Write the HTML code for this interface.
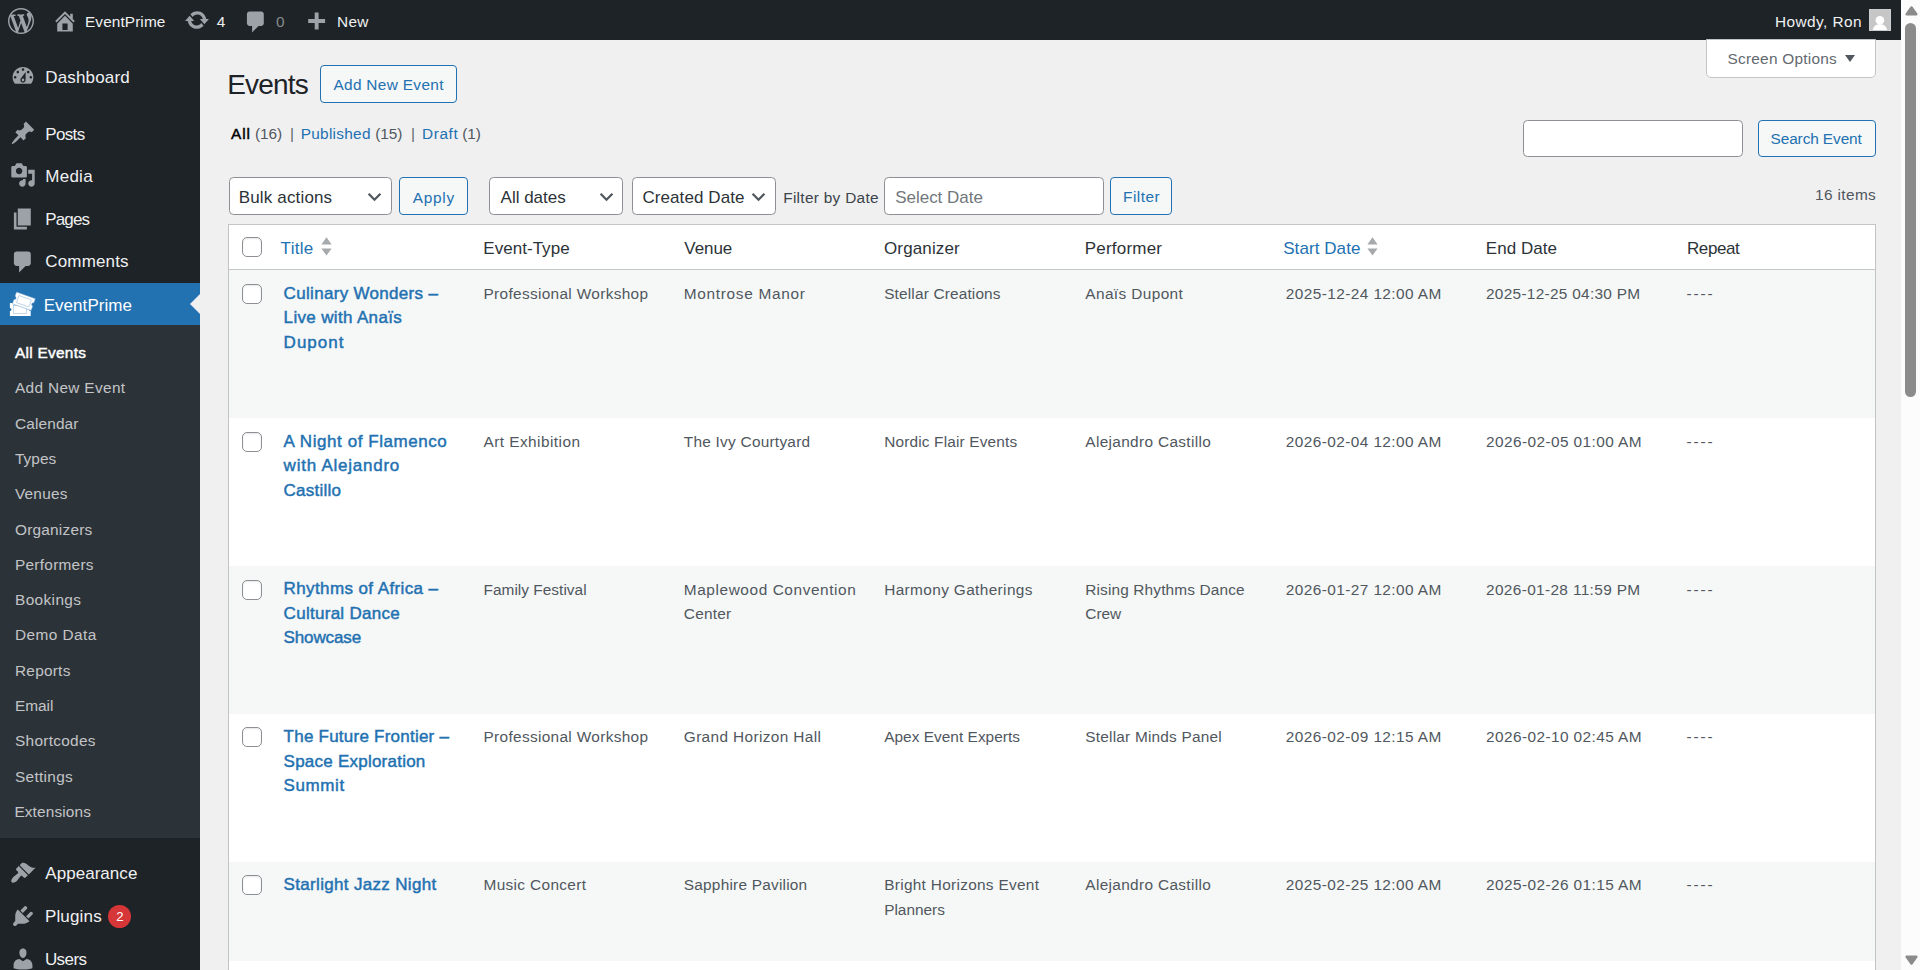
<!DOCTYPE html>
<html lang="en">
<head>
<meta charset="utf-8">
<title>Events ‹ EventPrime — WordPress</title>
<style>
*{box-sizing:border-box}
html,body{margin:0;padding:0}
html{overflow:hidden}
body{width:1920px;height:970px;overflow:hidden;position:relative;background:#f0f0f1;font-family:"Liberation Sans",sans-serif;font-size:16.25px;color:#3c434a}
svg{display:block}
.t{position:absolute;white-space:nowrap}
#bar{position:absolute;left:0;top:0;width:1901px;height:40px;background:#1d2327;color:#f0f0f1}
#menu{position:absolute;left:0;top:40px;width:200px;height:930px;background:#1d2327;color:#f0f0f1}
#menu>div,#bar>div,#main>div,#tbl>div{position:absolute}
.btn{position:absolute;border:1.25px solid #2271b1;border-radius:4px;background:#f6f7f7}
.sel{position:absolute;border:1.25px solid #8c8f94;border-radius:4.5px;background:#fff;height:37.5px}
.cb{position:absolute;left:242px;width:20px;height:20px;border:1.25px solid #8c8f94;border-radius:5px;background:#fff;box-shadow:inset 0 1px 2px rgba(0,0,0,.1)}
#tbl{position:absolute;left:228px;top:224px;width:1648px;height:760px;border:1px solid #c3c4c7;background:#fff;box-shadow:0 1px 1px rgba(0,0,0,.04)}
#sb{position:absolute;left:1901px;top:0;width:19px;height:970px;background:#fcfcfc}
</style>
</head>
<body>
<nav aria-label="Main menu">
<div id="menu"></div>
<svg style="position:absolute;left:9.50px;top:63.35px;width:26.0px;height:26.0px" viewBox="0 0 20 20"><path fill="#9ca2a7" d="M3.76 16h12.48c1.1-1.37 1.76-3.11 1.76-5 0-4.42-3.58-8-8-8s-8 3.58-8 8c0 1.89.66 3.63 1.76 5zM10 4c.55 0 1 .45 1 1s-.45 1-1 1-1-.45-1-1 .45-1 1-1zM6 6c.55 0 1 .45 1 1s-.45 1-1 1-1-.45-1-1 .45-1 1-1zm8 0c.55 0 1 .45 1 1s-.45 1-1 1-1-.45-1-1 .45-1 1-1zm-5.370 5.550L12 7v6c0 1.100-.9 2-2 2s-2-.9-2-2c0-.570.240-1.080.630-1.450zM4 10c.55 0 1 .45 1 1s-.45 1-1 1-1-.45-1-1 .45-1 1-1zm12 0c.55 0 1 .45 1 1s-.45 1-1 1-1-.45-1-1 .45-1 1-1zm-5 3c0-.55-.45-1-1-1s-1 .45-1 1 .45 1 1 1 1-.45 1-1z"/></svg>
<span class="t" style="top:68.10px;font-size:17.0px;line-height:19px;letter-spacing:0.147px;left:45.30px;color:#f0f0f1;">Dashboard</span>
<svg style="position:absolute;left:9.50px;top:119.85px;width:26.0px;height:26.0px" viewBox="0 0 20 20"><path fill="#9ca2a7" d="M10.44 3.02l1.82-1.82 6.36 6.35-1.83 1.82c-1.05-.68-2.48-.57-3.41.36l-.75.75c-.92.93-1.04 2.35-.35 3.41l-1.83 1.82-2.41-2.41-2.8 2.79c-.42.42-3.38 2.71-3.8 2.29s1.860-3.390 2.280-3.810l2.790-2.790L4.100 9.360l1.830-1.820c1.050.690 2.480.570 3.400-.360l.750-.750c.930-.920 1.050-2.350.360-3.410z"/></svg>
<span class="t" style="top:124.60px;font-size:17.0px;line-height:19px;letter-spacing:-0.666px;left:45.30px;color:#f0f0f1;">Posts</span>
<svg style="position:absolute;left:9.50px;top:162.25px;width:26.0px;height:26.0px" viewBox="0 0 20 20"><path fill="#9ca2a7" d="M13 11V4c0-.55-.45-1-1-1h-1.670L9 1H5L3.670 3H2c-.55 0-1 .45-1 1v7c0 .55.45 1 1 1h10c.55 0 1-.45 1-1zM7 4.500c1.380 0 2.500 1.120 2.500 2.500S8.380 9.500 7 9.500 4.500 8.380 4.500 7 5.620 4.500 7 4.500zM14 6h5v10.500c0 1.380-1.120 2.500-2.500 2.500S14 17.880 14 16.500s1.120-2.500 2.500-2.500c.170 0 .340.020.500.050V9h-3V6zm-4 8.050V13h2v3.500c0 1.380-1.120 2.500-2.500 2.500S7 17.880 7 16.500 8.120 14 9.500 14c.170 0 .340.020.500.050z"/></svg>
<span class="t" style="top:167.00px;font-size:17.0px;line-height:19px;letter-spacing:0.249px;left:45.30px;color:#f0f0f1;">Media</span>
<svg style="position:absolute;left:9.50px;top:205.75px;width:26.0px;height:26.0px" viewBox="0 0 20 20"><path fill="#9ca2a7" d="M6 15V2h10v13H6zm-1 1h8v2H3V5h2v11z"/></svg>
<span class="t" style="top:209.50px;font-size:17.0px;line-height:19px;letter-spacing:-0.858px;left:45.30px;color:#f0f0f1;">Pages</span>
<svg style="position:absolute;left:9.50px;top:248.55px;width:26.0px;height:26.0px" viewBox="0 0 20 20"><path fill="#9ca2a7" d="M5 2h9c1.1 0 2 .9 2 2v7c0 1.1-.9 2-2 2h-2l-5 5v-5H5c-1.1 0-2-.9-2-2V4c0-1.1.9-2 2-2z"/></svg>
<span class="t" style="top:252.30px;font-size:17.0px;line-height:19px;letter-spacing:0.156px;left:45.30px;color:#f0f0f1;">Comments</span>
<div style="position:absolute;left:0;top:283px;width:200px;height:42px;background:#2271b1"></div>
<div style="position:absolute;left:190px;top:293.5px;width:0;height:0;border:10.5px solid transparent;border-right:10px solid #f0f0f1;border-left:none"></div>
<svg style="position:absolute;left:0;top:284px;width:50px;height:40px" viewBox="0 284 50 40">
<path fill="#fff" d="M9.900 303h20.800v4.900a1.600 1.600 0 0 0 0 3.200v4.900H9.900v-4.900a1.600 1.600 0 0 0 0-3.200z"/>
<rect x="13.600" y="305.600" width="12.800" height="8" fill="none" stroke="#9fc1e2" stroke-width=".6"/>
<g transform="translate(16.500 292) rotate(19.400)">
<path fill="#fff" stroke="#6fa3d3" stroke-width=".5" d="M0 0h20v4.600a1.650 1.650 0 0 0 0 3.300v4.600H0v-4.600a1.650 1.650 0 0 0 0-3.300z"/>
<rect x="3.400" y="2.500" width="13.200" height="7.500" fill="none" stroke="#9fc1e2" stroke-width=".6"/>
</g></svg>
<span class="t" style="top:295.60px;font-size:17.0px;line-height:19px;letter-spacing:0.046px;left:43.70px;color:#fff;">EventPrime</span>
<div style="position:absolute;left:0;top:325px;width:200px;height:513px;background:#2c3338"></div>
<span class="t" style="top:344.00px;font-size:15.4px;line-height:17px;letter-spacing:0.278px;left:15.00px;color:#fff;-webkit-text-stroke:0.45px;">All Events</span>
<span class="t" style="top:379.30px;font-size:15.4px;line-height:17px;letter-spacing:0.330px;left:15.00px;color:#c3c4c7;">Add New Event</span>
<span class="t" style="top:414.60px;font-size:15.4px;line-height:17px;letter-spacing:0.133px;left:15.00px;color:#c3c4c7;">Calendar</span>
<span class="t" style="top:449.90px;font-size:15.4px;line-height:17px;letter-spacing:0.057px;left:15.00px;color:#c3c4c7;">Types</span>
<span class="t" style="top:485.20px;font-size:15.4px;line-height:17px;letter-spacing:0.199px;left:15.00px;color:#c3c4c7;">Venues</span>
<span class="t" style="top:520.50px;font-size:15.4px;line-height:17px;letter-spacing:0.214px;left:15.00px;color:#c3c4c7;">Organizers</span>
<span class="t" style="top:555.80px;font-size:15.4px;line-height:17px;letter-spacing:0.268px;left:15.00px;color:#c3c4c7;">Performers</span>
<span class="t" style="top:591.10px;font-size:15.4px;line-height:17px;letter-spacing:0.385px;left:15.00px;color:#c3c4c7;">Bookings</span>
<span class="t" style="top:626.40px;font-size:15.4px;line-height:17px;letter-spacing:0.429px;left:15.00px;color:#c3c4c7;">Demo Data</span>
<span class="t" style="top:661.70px;font-size:15.4px;line-height:17px;letter-spacing:0.239px;left:15.00px;color:#c3c4c7;">Reports</span>
<span class="t" style="top:697.00px;font-size:15.4px;line-height:17px;letter-spacing:-0.036px;left:15.00px;color:#c3c4c7;">Email</span>
<span class="t" style="top:732.30px;font-size:15.4px;line-height:17px;letter-spacing:0.289px;left:15.00px;color:#c3c4c7;">Shortcodes</span>
<span class="t" style="top:767.60px;font-size:15.4px;line-height:17px;letter-spacing:0.296px;left:15.00px;color:#c3c4c7;">Settings</span>
<span class="t" style="top:802.90px;font-size:15.4px;line-height:17px;letter-spacing:0.134px;left:14.40px;color:#c3c4c7;">Extensions</span>
<svg style="position:absolute;left:9.50px;top:859.75px;width:26.0px;height:26.0px" viewBox="0 0 20 20"><path fill="#9ca2a7" d="M14.48 11.06L7.41 3.99l1.5-1.5c.5-.56 2.3-.47 3.51.32 1.21.8 1.43 1.28 2.91 2.1 1.18.64 2.45 1.26 4.45.85zm-.71.71L6.7 4.7 4.93 6.47c-.39.39-.39 1.02 0 1.41l1.06 1.06c.39.39.39 1.03 0 1.42-.6.6-1.43 1.11-2.21 1.69-.35.26-.7.53-1.01.84C1.43 14.23.4 16.08 1.4 17.07c.99 1 2.84-.03 4.18-1.36.31-.31.58-.66.85-1.02.57-.78 1.08-1.61 1.69-2.21.39-.39 1.02-.39 1.41 0l1.06 1.06c.39.39 1.02.39 1.41 0z"/></svg>
<span class="t" style="top:864.00px;font-size:17.0px;line-height:19px;letter-spacing:0.040px;left:45.30px;color:#f0f0f1;">Appearance</span>
<svg style="position:absolute;left:9.50px;top:903.05px;width:26.0px;height:26.0px" viewBox="0 0 20 20"><path fill="#9ca2a7" d="M13.11 4.36L9.87 7.6 8 5.73l3.24-3.24c.35-.34 1.05-.2 1.56.32.52.51.66 1.21.31 1.55zm-8 1.77l.91-1.12 9.010 9.010-1.190.840c-.710.710-2.630 1.160-3.820 1.160H6.140L4.900 17.260c-.590.590-1.540.590-2.120 0-.590-.580-.590-1.530 0-2.120l1.240-1.240v-3.880c0-1.130.4-3.190 1.090-3.890zm7.260 3.970l3.240-3.240c.34-.35 1.040-.21 1.550.31.520.51.660 1.210.310 1.550l-3.240 3.250z"/></svg>
<span class="t" style="top:907.00px;font-size:17.0px;line-height:19px;letter-spacing:0.174px;left:44.90px;color:#f0f0f1;">Plugins</span>
<div style="position:absolute;left:108.200px;top:905px;width:23px;height:23px;border-radius:12px;background:#d63638"></div>
<span class="t" style="top:909.20px;font-size:13.2px;line-height:15px;letter-spacing:0.071px;left:116.20px;color:#fff;">2</span>
<svg style="position:absolute;left:9.50px;top:945.75px;width:26.0px;height:26.0px" viewBox="0 0 20 20"><path fill="#9ca2a7" d="M10 9.25c-2.27 0-2.73-3.44-2.73-3.44C7 4.02 7.82 2 9.970 2c2.160 0 2.980 2.020 2.710 3.810 0 0-.410 3.440-2.680 3.440zm0 2.570L12.720 10c2.390 0 4.520 2.330 4.520 4.530v2.490s-3.650 1.130-7.240 1.130c-3.650 0-7.240-1.130-7.240-1.130v-2.490c0-2.250 1.940-4.480 4.470-4.480z"/></svg>
<span class="t" style="top:950.00px;font-size:17.0px;line-height:19px;letter-spacing:-0.571px;left:44.90px;color:#f0f0f1;">Users</span>
</nav>
<header aria-label="Toolbar">
<div id="bar"></div>
<svg style="position:absolute;left:8.25px;top:7.50px;width:26.0px;height:26.0px" viewBox="0 0 20 20"><path fill="#9ca2a7" d="M20 10c0-5.51-4.49-10-10-10C4.48 0 0 4.49 0 10c0 5.52 4.48 10 10 10 5.51 0 10-4.48 10-10zM7.78 15.37L4.37 6.22c.55-.02 1.17-.08 1.17-.08.5-.06.44-1.13-.06-1.11 0 0-1.45.11-2.37.11-.18 0-.37 0-.58-.01C4.12 2.69 6.87 1.11 10 1.11c2.33 0 4.45.87 6.05 2.34-.68-.11-1.65.39-1.65 1.58 0 .74.45 1.36.9 2.1.35.61.55 1.36.55 2.46 0 1.49-1.4 5-1.4 5l-3.03-8.37c.54-.02.82-.17.82-.17.5-.05.44-1.25-.06-1.22 0 0-1.44.12-2.38.12-.87 0-2.33-.12-2.33-.12-.5-.03-.56 1.2-.06 1.22l.92.08 1.26 3.41zM17.41 10c.24-.64.74-1.87.43-4.25.7 1.29 1.05 2.71 1.05 4.25 0 3.29-1.73 6.24-4.4 7.78.97-2.59 1.94-5.2 2.92-7.78zM6.1 18.09C3.12 16.65 1.11 13.53 1.11 10c0-1.3.23-2.48.72-3.59C3.25 10.3 4.67 14.2 6.1 18.09zm4.03-6.63l2.58 6.98c-.86.29-1.76.45-2.71.45-.79 0-1.57-.11-2.29-.33.81-2.38 1.62-4.74 2.42-7.1z"/></svg>
<svg style="position:absolute;left:51.50px;top:7.90px;width:26.0px;height:26.0px" viewBox="0 0 20 20"><path fill="#9ca2a7" d="M16 8.5l1.53 1.53-1.06 1.06L10 4.62l-6.47 6.47-1.06-1.06L10 2.5l4 4v-2h2v4zm-6-2.46l6 5.99V18H4v-5.97zM12 17v-5H8v5h4z"/></svg>
<span class="t" style="top:13.00px;font-size:15.4px;line-height:17px;letter-spacing:0.089px;left:85.00px;color:#f0f0f1;">EventPrime</span>
<svg style="position:absolute;left:183.50px;top:7.30px;width:26.0px;height:26.0px" viewBox="0 0 20 20"><path fill="#9ca2a7" d="M10.2 3.28c3.53 0 6.43 2.61 6.92 6h2.08l-3.5 4-3.5-4h2.32c-.45-1.97-2.21-3.45-4.32-3.45-1.45 0-2.73.71-3.54 1.78L4.95 5.66C6.23 4.2 8.11 3.28 10.2 3.28zm-.4 13.44c-3.52 0-6.43-2.61-6.92-6H.8l3.5-4c1.17 1.33 2.33 2.67 3.5 4H5.48c.45 1.97 2.21 3.45 4.32 3.45 1.45 0 2.73-.71 3.54-1.78l1.71 1.95c-1.28 1.46-3.15 2.38-5.25 2.38z"/></svg>
<span class="t" style="top:13.00px;font-size:15.4px;line-height:17px;letter-spacing:0.195px;left:216.70px;color:#f0f0f1;">4</span>
<svg style="position:absolute;left:243.25px;top:8.50px;width:26.0px;height:26.0px" viewBox="0 0 20 20"><path fill="#9ca2a7" d="M5 2h9c1.1 0 2 .9 2 2v7c0 1.1-.9 2-2 2h-2l-5 5v-5H5c-1.1 0-2-.9-2-2V4c0-1.1.9-2 2-2z"/></svg>
<span class="t" style="top:13.00px;font-size:15.4px;line-height:17px;letter-spacing:0.195px;left:276.00px;color:#878b8e;">0</span>
<svg style="position:absolute;left:303.20px;top:9.50px;width:26.0px;height:26.0px" viewBox="0 0 20 20"><path fill="#9ca2a7" d="M17 7v3h-5v5H9v-5H4V7h5V2h3v5h5z"/></svg>
<span class="t" style="top:13.00px;font-size:15.4px;line-height:17px;letter-spacing:0.299px;left:337.00px;color:#f0f0f1;">New</span>
<span class="t" style="top:13.00px;font-size:15.4px;line-height:17px;letter-spacing:0.436px;left:1775.00px;color:#f0f0f1;">Howdy, Ron</span>
<div style="position:absolute;left:1869px;top:9px;width:22px;height:22px;background:#c6c6c6;border:1px solid #cacccf;overflow:hidden"><svg style="position:absolute;left:0;top:0;width:20px;height:20px" viewBox="0 0 20 20"><circle cx="9.900" cy="10.200" r="4.300" fill="#fff"/><path fill="#fff" d="M2.600 20.500c.6-4.300 3.400-6.200 7.300-6.200s6.700 1.900 7.300 6.200z"/></svg></div>
</header>
<main>
<div style="position:absolute;left:1706.250px;top:39px;width:170px;height:38.600px;background:#fff;border:1.25px solid #c3c4c7;border-radius:0 0 5px 5px"></div>
<span class="t" style="top:49.50px;font-size:15.4px;line-height:17px;letter-spacing:0.243px;left:1727.50px;color:#646970;">Screen Options</span>
<div style="position:absolute;left:1844.800px;top:54.800px;width:0;height:0;border:5.200px solid transparent;border-top:7.800px solid #50575e;border-bottom:none"></div>
<span class="t" style="top:68.60px;font-size:28.0px;line-height:31px;letter-spacing:-0.808px;left:227.20px;color:#1d2327;">Events</span>
<div class="btn" style="left:320.200px;top:65px;width:136.500px;height:37.800px"></div>
<span class="t" style="top:75.70px;font-size:15.4px;line-height:17px;letter-spacing:0.330px;left:333.40px;color:#2271b1;">Add New Event</span>
<span class="t" style="top:124.50px;font-size:15.4px;line-height:17px;letter-spacing:0.894px;left:231.00px;color:#000;-webkit-text-stroke:0.45px;">All</span>
<span class="t" style="top:124.50px;font-size:15.4px;line-height:17px;letter-spacing:-0.020px;left:254.90px;color:#50575e;">(16)</span>
<span class="t" style="top:124.50px;font-size:15.4px;line-height:17px;letter-spacing:-0.112px;left:289.90px;color:#646970;">|</span>
<span class="t" style="top:124.50px;font-size:15.4px;line-height:17px;letter-spacing:0.278px;left:300.70px;color:#2271b1;">Published</span>
<span class="t" style="top:124.50px;font-size:15.4px;line-height:17px;letter-spacing:-0.020px;left:375.20px;color:#50575e;">(15)</span>
<span class="t" style="top:124.50px;font-size:15.4px;line-height:17px;letter-spacing:-0.112px;left:410.90px;color:#646970;">|</span>
<span class="t" style="top:124.50px;font-size:15.4px;line-height:17px;letter-spacing:0.633px;left:421.90px;color:#2271b1;">Draft</span>
<span class="t" style="top:124.50px;font-size:15.4px;line-height:17px;letter-spacing:-0.127px;left:462.30px;color:#50575e;">(1)</span>
<div class="sel" style="left:1523px;top:120px;width:219.700px;height:37px"></div>
<div class="btn" style="left:1758px;top:120px;width:118px;height:37px"></div>
<span class="t" style="top:130.20px;font-size:15.4px;line-height:17px;letter-spacing:-0.096px;left:1770.50px;color:#2271b1;">Search Event</span>
<div class="sel" style="left:229.200px;top:177.300px;width:162.500px"></div>
<span class="t" style="top:187.70px;font-size:17.0px;line-height:19px;letter-spacing:0.160px;left:238.70px;color:#2c3338;">Bulk actions</span>
<svg style="position:absolute;left:367.4px;top:192px;width:15px;height:10px" viewBox="0 0 15 10"><path d="M1.600 1.800l5.900 5.900 5.900-5.900" fill="none" stroke="#50575e" stroke-width="2.300"/></svg>
<div class="btn" style="left:399.200px;top:177.300px;width:68.800px;height:37.500px"></div>
<span class="t" style="top:188.70px;font-size:15.4px;line-height:17px;letter-spacing:0.714px;left:412.80px;color:#2271b1;">Apply</span>
<div class="sel" style="left:489.300px;top:177.300px;width:133.300px"></div>
<span class="t" style="top:187.70px;font-size:17.0px;line-height:19px;letter-spacing:-0.018px;left:500.60px;color:#2c3338;">All dates</span>
<svg style="position:absolute;left:598.7px;top:192px;width:15px;height:10px" viewBox="0 0 15 10"><path d="M1.600 1.800l5.900 5.900 5.900-5.900" fill="none" stroke="#50575e" stroke-width="2.300"/></svg>
<div class="sel" style="left:632.300px;top:177.300px;width:143.300px"></div>
<span class="t" style="top:187.70px;font-size:17.0px;line-height:19px;letter-spacing:0.089px;left:642.40px;color:#2c3338;">Created Date</span>
<svg style="position:absolute;left:750.8px;top:192px;width:15px;height:10px" viewBox="0 0 15 10"><path d="M1.600 1.800l5.900 5.900 5.900-5.900" fill="none" stroke="#50575e" stroke-width="2.300"/></svg>
<span class="t" style="top:189.00px;font-size:15.4px;line-height:17px;letter-spacing:0.297px;left:783.20px;color:#3c434a;">Filter by Date</span>
<div class="sel" style="left:884.400px;top:177.300px;width:219.200px"></div>
<span class="t" style="top:187.70px;font-size:17.0px;line-height:19px;letter-spacing:-0.019px;left:895.20px;color:#72777c;">Select Date</span>
<div class="btn" style="left:1110px;top:177.300px;width:62px;height:37.500px"></div>
<span class="t" style="top:188.40px;font-size:15.4px;line-height:17px;letter-spacing:0.446px;left:1123.10px;color:#2271b1;">Filter</span>
<span class="t" style="top:186.40px;font-size:15.4px;line-height:17px;letter-spacing:0.373px;left:1815.00px;color:#50575e;">16 items</span>
<div id="tbl"></div>
<div style="position:absolute;left:229px;top:269px;width:1646px;height:1px;background:#c3c4c7"></div>
<div style="position:absolute;left:229px;top:270px;width:1646px;height:148px;background:#f6f7f7"></div>
<div style="position:absolute;left:229px;top:566px;width:1646px;height:148px;background:#f6f7f7"></div>
<div style="position:absolute;left:229px;top:862px;width:1646px;height:99px;background:#f6f7f7"></div>
<i class="cb" style="top:237px"></i>
<span class="t" style="top:238.75px;font-size:17.0px;line-height:19px;letter-spacing:0.311px;left:280.60px;color:#2271b1;">Title</span>
<svg style="position:absolute;left:320.8px;top:236.500px;width:11px;height:19px" viewBox="0 0 11 19"><path d="M5.500 .300l5.100 7.200H.400zM5.500 18.600l5.100-7.200H.400z" fill="#a7aaad"/></svg>
<span class="t" style="top:238.75px;font-size:17.0px;line-height:19px;letter-spacing:0.033px;left:483.30px;color:#2c3338;">Event-Type</span>
<span class="t" style="top:238.75px;font-size:17.0px;line-height:19px;letter-spacing:-0.060px;left:684.30px;color:#2c3338;">Venue</span>
<span class="t" style="top:238.75px;font-size:17.0px;line-height:19px;letter-spacing:0.140px;left:884.00px;color:#2c3338;">Organizer</span>
<span class="t" style="top:238.75px;font-size:17.0px;line-height:19px;letter-spacing:0.202px;left:1084.80px;color:#2c3338;">Performer</span>
<span class="t" style="top:238.75px;font-size:17.0px;line-height:19px;letter-spacing:0.073px;left:1283.20px;color:#2271b1;">Start Date</span>
<svg style="position:absolute;left:1367px;top:236.500px;width:11px;height:19px" viewBox="0 0 11 19"><path d="M5.500 .300l5.100 7.200H.400zM5.500 18.600l5.100-7.200H.400z" fill="#a7aaad"/></svg>
<span class="t" style="top:238.75px;font-size:17.0px;line-height:19px;letter-spacing:0.031px;left:1485.80px;color:#2c3338;">End Date</span>
<span class="t" style="top:238.75px;font-size:17.0px;line-height:19px;letter-spacing:-0.425px;left:1687.00px;color:#2c3338;">Repeat</span>
<i class="cb" style="top:284px"></i>
<span class="t" style="top:284.00px;font-size:17.0px;line-height:19px;letter-spacing:0.313px;left:283.60px;color:#2271b1;-webkit-text-stroke:0.45px;">Culinary Wonders –</span>
<span class="t" style="top:308.00px;font-size:17.0px;line-height:19px;letter-spacing:0.340px;left:283.60px;color:#2271b1;-webkit-text-stroke:0.45px;">Live with Anaïs</span>
<span class="t" style="top:333.00px;font-size:17.0px;line-height:19px;letter-spacing:1.016px;left:283.60px;color:#2271b1;-webkit-text-stroke:0.45px;">Dupont</span>
<span class="t" style="top:285.00px;font-size:15.4px;line-height:17px;letter-spacing:0.327px;left:483.50px;color:#50575e;">Professional Workshop</span>
<span class="t" style="top:285.00px;font-size:15.4px;line-height:17px;letter-spacing:0.691px;left:683.80px;color:#50575e;">Montrose Manor</span>
<span class="t" style="top:285.00px;font-size:15.4px;line-height:17px;letter-spacing:0.161px;left:884.20px;color:#50575e;">Stellar Creations</span>
<span class="t" style="top:285.00px;font-size:15.4px;line-height:17px;letter-spacing:0.390px;left:1085.30px;color:#50575e;">Anaïs Dupont</span>
<span class="t" style="top:285.00px;font-size:15.4px;line-height:17px;letter-spacing:0.416px;left:1285.80px;color:#50575e;">2025-12-24 12:00 AM</span>
<span class="t" style="top:285.00px;font-size:15.4px;line-height:17px;letter-spacing:0.292px;left:1486.00px;color:#50575e;">2025-12-25 04:30 PM</span>
<span class="t" style="top:285.00px;font-size:15.4px;line-height:17px;letter-spacing:1.827px;left:1686.60px;color:#50575e;">----</span>
<i class="cb" style="top:432px"></i>
<span class="t" style="top:432.00px;font-size:17.0px;line-height:19px;letter-spacing:0.563px;left:283.60px;color:#2271b1;-webkit-text-stroke:0.45px;">A Night of Flamenco</span>
<span class="t" style="top:456.00px;font-size:17.0px;line-height:19px;letter-spacing:0.758px;left:283.60px;color:#2271b1;-webkit-text-stroke:0.45px;">with Alejandro</span>
<span class="t" style="top:481.00px;font-size:17.0px;line-height:19px;letter-spacing:0.223px;left:283.60px;color:#2271b1;-webkit-text-stroke:0.45px;">Castillo</span>
<span class="t" style="top:433.00px;font-size:15.4px;line-height:17px;letter-spacing:0.449px;left:483.50px;color:#50575e;">Art Exhibition</span>
<span class="t" style="top:433.00px;font-size:15.4px;line-height:17px;letter-spacing:0.248px;left:683.80px;color:#50575e;">The Ivy Courtyard</span>
<span class="t" style="top:433.00px;font-size:15.4px;line-height:17px;letter-spacing:0.165px;left:884.20px;color:#50575e;">Nordic Flair Events</span>
<span class="t" style="top:433.00px;font-size:15.4px;line-height:17px;letter-spacing:0.338px;left:1085.30px;color:#50575e;">Alejandro Castillo</span>
<span class="t" style="top:433.00px;font-size:15.4px;line-height:17px;letter-spacing:0.416px;left:1285.80px;color:#50575e;">2026-02-04 12:00 AM</span>
<span class="t" style="top:433.00px;font-size:15.4px;line-height:17px;letter-spacing:0.416px;left:1486.00px;color:#50575e;">2026-02-05 01:00 AM</span>
<span class="t" style="top:433.00px;font-size:15.4px;line-height:17px;letter-spacing:1.827px;left:1686.60px;color:#50575e;">----</span>
<i class="cb" style="top:580px"></i>
<span class="t" style="top:579.00px;font-size:17.0px;line-height:19px;letter-spacing:0.392px;left:283.60px;color:#2271b1;-webkit-text-stroke:0.45px;">Rhythms of Africa –</span>
<span class="t" style="top:604.00px;font-size:17.0px;line-height:19px;letter-spacing:0.281px;left:283.60px;color:#2271b1;-webkit-text-stroke:0.45px;">Cultural Dance</span>
<span class="t" style="top:628.00px;font-size:17.0px;line-height:19px;letter-spacing:-0.133px;left:283.60px;color:#2271b1;-webkit-text-stroke:0.45px;">Showcase</span>
<span class="t" style="top:581.00px;font-size:15.4px;line-height:17px;letter-spacing:0.032px;left:483.50px;color:#50575e;">Family Festival</span>
<span class="t" style="top:581.00px;font-size:15.4px;line-height:17px;letter-spacing:0.588px;left:683.80px;color:#50575e;">Maplewood Convention</span>
<span class="t" style="top:605.00px;font-size:15.4px;line-height:17px;letter-spacing:0.237px;left:683.80px;color:#50575e;">Center</span>
<span class="t" style="top:581.00px;font-size:15.4px;line-height:17px;letter-spacing:0.368px;left:884.20px;color:#50575e;">Harmony Gatherings</span>
<span class="t" style="top:581.00px;font-size:15.4px;line-height:17px;letter-spacing:0.145px;left:1085.30px;color:#50575e;">Rising Rhythms Dance</span>
<span class="t" style="top:605.00px;font-size:15.4px;line-height:17px;letter-spacing:0.008px;left:1085.30px;color:#50575e;">Crew</span>
<span class="t" style="top:581.00px;font-size:15.4px;line-height:17px;letter-spacing:0.416px;left:1285.80px;color:#50575e;">2026-01-27 12:00 AM</span>
<span class="t" style="top:581.00px;font-size:15.4px;line-height:17px;letter-spacing:0.356px;left:1486.00px;color:#50575e;">2026-01-28 11:59 PM</span>
<span class="t" style="top:581.00px;font-size:15.4px;line-height:17px;letter-spacing:1.827px;left:1686.60px;color:#50575e;">----</span>
<i class="cb" style="top:727px"></i>
<span class="t" style="top:727.00px;font-size:17.0px;line-height:19px;letter-spacing:0.234px;left:283.60px;color:#2271b1;-webkit-text-stroke:0.45px;">The Future Frontier –</span>
<span class="t" style="top:752.00px;font-size:17.0px;line-height:19px;letter-spacing:0.233px;left:283.60px;color:#2271b1;-webkit-text-stroke:0.45px;">Space Exploration</span>
<span class="t" style="top:776.00px;font-size:17.0px;line-height:19px;letter-spacing:0.597px;left:283.60px;color:#2271b1;-webkit-text-stroke:0.45px;">Summit</span>
<span class="t" style="top:728.00px;font-size:15.4px;line-height:17px;letter-spacing:0.327px;left:483.50px;color:#50575e;">Professional Workshop</span>
<span class="t" style="top:728.00px;font-size:15.4px;line-height:17px;letter-spacing:0.364px;left:683.80px;color:#50575e;">Grand Horizon Hall</span>
<span class="t" style="top:728.00px;font-size:15.4px;line-height:17px;letter-spacing:0.037px;left:884.20px;color:#50575e;">Apex Event Experts</span>
<span class="t" style="top:728.00px;font-size:15.4px;line-height:17px;letter-spacing:0.212px;left:1085.30px;color:#50575e;">Stellar Minds Panel</span>
<span class="t" style="top:728.00px;font-size:15.4px;line-height:17px;letter-spacing:0.416px;left:1285.80px;color:#50575e;">2026-02-09 12:15 AM</span>
<span class="t" style="top:728.00px;font-size:15.4px;line-height:17px;letter-spacing:0.416px;left:1486.00px;color:#50575e;">2026-02-10 02:45 AM</span>
<span class="t" style="top:728.00px;font-size:15.4px;line-height:17px;letter-spacing:1.827px;left:1686.60px;color:#50575e;">----</span>
<i class="cb" style="top:875px"></i>
<span class="t" style="top:875.00px;font-size:17.0px;line-height:19px;letter-spacing:0.324px;left:283.60px;color:#2271b1;-webkit-text-stroke:0.45px;">Starlight Jazz Night</span>
<span class="t" style="top:876.00px;font-size:15.4px;line-height:17px;letter-spacing:0.343px;left:483.50px;color:#50575e;">Music Concert</span>
<span class="t" style="top:876.00px;font-size:15.4px;line-height:17px;letter-spacing:0.223px;left:683.80px;color:#50575e;">Sapphire Pavilion</span>
<span class="t" style="top:876.00px;font-size:15.4px;line-height:17px;letter-spacing:0.298px;left:884.20px;color:#50575e;">Bright Horizons Event</span>
<span class="t" style="top:901.00px;font-size:15.4px;line-height:17px;letter-spacing:-0.006px;left:884.20px;color:#50575e;">Planners</span>
<span class="t" style="top:876.00px;font-size:15.4px;line-height:17px;letter-spacing:0.338px;left:1085.30px;color:#50575e;">Alejandro Castillo</span>
<span class="t" style="top:876.00px;font-size:15.4px;line-height:17px;letter-spacing:0.416px;left:1285.80px;color:#50575e;">2025-02-25 12:00 AM</span>
<span class="t" style="top:876.00px;font-size:15.4px;line-height:17px;letter-spacing:0.416px;left:1486.00px;color:#50575e;">2025-02-26 01:15 AM</span>
<span class="t" style="top:876.00px;font-size:15.4px;line-height:17px;letter-spacing:1.827px;left:1686.60px;color:#50575e;">----</span>
</main>
<div id="sb"><svg style="position:absolute;left:3px;top:5px;width:15px;height:12px" viewBox="0 0 15 12"><path d="M7.500 2.600L12.300 9.200H2.700z" fill="#8b8b8b" stroke="#8b8b8b" stroke-width="2.600" stroke-linejoin="round"/></svg><i style="position:absolute;left:4px;top:22.800px;width:11px;height:374px;border-radius:5.500px;background:#8b8b8b"></i><svg style="position:absolute;left:3px;top:953.600px;width:15px;height:12px" viewBox="0 0 15 12"><path d="M7.500 9.400L12.300 2.800H2.700z" fill="#8b8b8b" stroke="#8b8b8b" stroke-width="2.600" stroke-linejoin="round"/></svg></div>
</body>
</html>
